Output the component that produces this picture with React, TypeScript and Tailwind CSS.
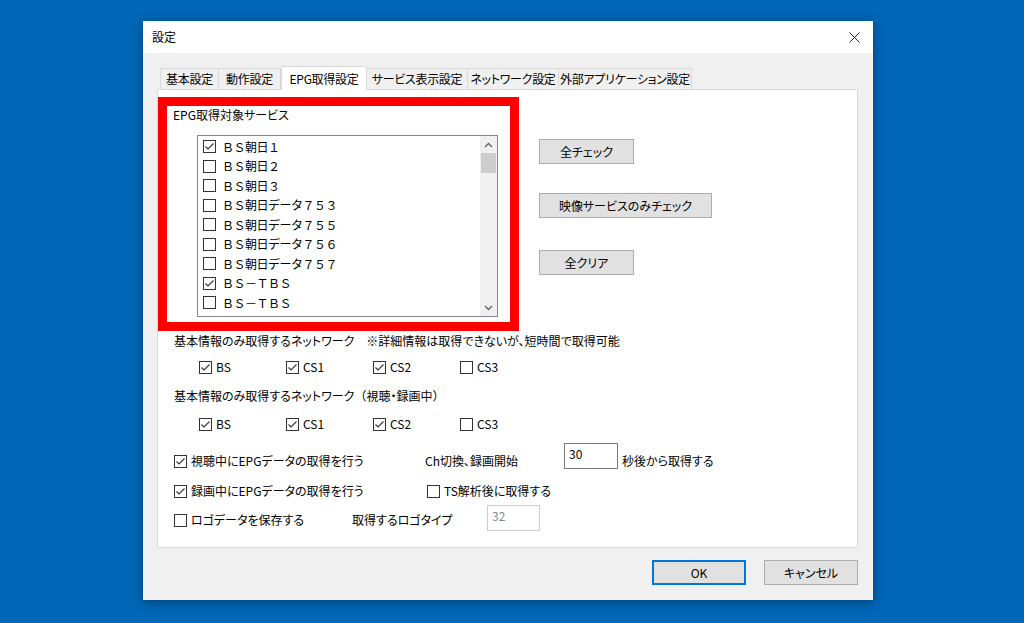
import React from "react";

const FONT = '"Noto Sans CJK JP", "Noto Sans", sans-serif';

const services: { name: string; checked: boolean }[] = [
  { name: "ＢＳ朝日１", checked: true },
  { name: "ＢＳ朝日２", checked: false },
  { name: "ＢＳ朝日３", checked: false },
  { name: "ＢＳ朝日データ７５３", checked: false },
  { name: "ＢＳ朝日データ７５５", checked: false },
  { name: "ＢＳ朝日データ７５６", checked: false },
  { name: "ＢＳ朝日データ７５７", checked: false },
  { name: "ＢＳ－ＴＢＳ", checked: true },
  { name: "ＢＳ－ＴＢＳ", checked: false },
];

const tabs = [
  { label: "基本設定", w: "w-[59px]" },
  { label: "動作設定", w: "w-[62px]" },
  { label: "EPG取得設定", w: "w-[86px]", active: true },
  { label: "サービス表示設定", w: "w-[101px]" },
  { label: "ネットワーク設定", w: "w-[91px]" },
  { label: "外部アプリケーション設定", w: "w-[133px]" },
];

function Box({ checked }: { checked: boolean }) {
  return (
    <span className="flex h-[13px] w-[13px] shrink-0 items-center justify-center border border-[#333333] bg-white">
      {checked && (
        <svg width="11" height="11" viewBox="0 0 11 11">
          <polyline points="1.5,5.5 4,8 9.5,2.5" fill="none" stroke="#333" strokeWidth="1.1" />
        </svg>
      )}
    </span>
  );
}

function Check({ checked, label, className = "" }: { checked: boolean; label: string; className?: string }) {
  return (
    <div className={`flex h-[20px] items-center gap-[4px] ${className}`}>
      <Box checked={checked} />
      <span className="whitespace-nowrap">{label}</span>
    </div>
  );
}

function Btn({ label, w, primary }: { label: string; w: string; primary?: boolean }) {
  return (
    <div
      className={`flex h-[25px] ${w} items-center justify-center border bg-[#e1e1e1] ${
        primary ? "border-[#0078d7] shadow-[inset_0_0_0_1px_#0078d7]" : "border-[#adadad]"
      }`}
    >
      {label}
    </div>
  );
}

function Chevron({ up }: { up?: boolean }) {
  return (
    <svg width="9" height="6" viewBox="0 0 9 6">
      <polyline
        points={up ? "1,5 4.5,1.5 8,5" : "1,1 4.5,4.5 8,1"}
        fill="none"
        stroke="#606060"
        strokeWidth="1.3"
      />
    </svg>
  );
}

function NetRow({ values }: { values: boolean[] }) {
  const names = ["BS", "CS1", "CS2", "CS3"];
  return (
    <div className="flex pl-[41px]">
      {names.map((n, i) => (
        <Check key={n} checked={values[i]} label={n} className="w-[87px]" />
      ))}
    </div>
  );
}

export default function App() {
  return (
    <div
      className="h-[623px] w-[1024px] overflow-hidden bg-[#0166b5] pl-[143px] pt-[21px] text-[12px] leading-[16px] text-black [font-feature-settings:'palt']"
      style={{ fontFamily: FONT }}
    >
      <div className="flex h-[579px] w-[730px] flex-col bg-[#f0f0f0] shadow-[0_2px_10px_rgba(0,0,0,0.35)]">
        {/* Title bar */}
        <div className="flex h-[32px] items-center justify-between bg-white pl-[9px] pr-[13px]">
          <span>設定</span>
          <svg width="11" height="11" viewBox="0 0 11 11">
            <path d="M0.5 0.5 L10.5 10.5 M10.5 0.5 L0.5 10.5" stroke="#222" strokeWidth="1" />
          </svg>
        </div>

        <div className="flex flex-1 flex-col pl-[14px] pr-[15px] pt-[13px]">
          {/* Tabs */}
          <div className="relative z-10 -mb-[1px] flex h-[24px] items-end pl-[3px] tracking-[-0.3px]">
            {tabs.map((t) =>
              t.active ? (
                <div
                  key={t.label}
                  className={`flex h-[24px] ${t.w} items-center justify-center whitespace-nowrap border border-b-0 border-[#d9d9d9] bg-white`}
                >
                  {t.label}
                </div>
              ) : (
                <div
                  key={t.label}
                  className={`mb-[1px] flex h-[21px] ${t.w} items-center justify-center whitespace-nowrap border border-b-0 border-l-0 border-[#d9d9d9] bg-[#f0f0f0] first:border-l`}
                >
                  {t.label}
                </div>
              )
            )}
          </div>

          {/* Panel */}
          <div className="flex h-[459px] flex-col border border-[#d9d9d9] bg-white pt-[7px]">
            <div className="flex">
              <div className="flex h-[234px] w-[361px] flex-col border-[9px] border-[#ff0000] pl-[6px] pt-[1px]">
                <div className="h-[16px]">EPG取得対象サービス</div>
                <div className="ml-[24px] mt-[12px] flex h-[182px] w-[301px] border border-[#828790] bg-white">
                  <div className="flex flex-1 flex-col pl-[5px] pt-[1px]">
                    {services.map((s, i) => (
                      <div key={i} className="flex h-[19.5px] items-center gap-[6px]">
                        <Box checked={s.checked} />
                        <span className="whitespace-nowrap tracking-[-0.5px] [font-feature-settings:normal]">
                          {s.name}
                        </span>
                      </div>
                    ))}
                  </div>
                  <div className="flex w-[17px] flex-col bg-[#f0f0f0]">
                    <div className="flex h-[17px] items-center justify-center">
                      <Chevron up />
                    </div>
                    <div className="mx-[1px] h-[20px] bg-[#cdcdcd]" />
                    <div className="flex-1" />
                    <div className="flex h-[17px] items-center justify-center">
                      <Chevron />
                    </div>
                  </div>
                </div>
              </div>

              <div className="ml-[20px] flex flex-col pt-[42px]">
                <Btn label="全チェック" w="w-[95px]" />
                <div className="mt-[29px]">
                  <Btn label="映像サービスのみチェック" w="w-[173px]" />
                </div>
                <div className="mt-[32px]">
                  <Btn label="全クリア" w="w-[95px]" />
                </div>
              </div>
            </div>

            <div className="flex h-[20px] items-center pl-[16px]">
              基本情報のみ取得するネットワーク　※詳細情報は取得できないが、短時間で取得可能
            </div>
            <div className="mt-[6px]">
              <NetRow values={[true, true, true, false]} />
            </div>
            <div className="mt-[9px] flex h-[20px] items-center pl-[16px]">
              基本情報のみ取得するネットワーク
              <span className="[font-feature-settings:normal]">（</span>視聴・録画中
              <span className="[font-feature-settings:normal]">）</span>
            </div>
            <div className="mt-[8px]">
              <NetRow values={[true, true, true, false]} />
            </div>

            <div className="mt-[9px] flex h-[28px] items-start pl-[16px]">
              <Check checked label="視聴中にEPGデータの取得を行う" className="mt-[8px] w-[251px]" />
              <div className="mt-[8px] flex h-[20px] w-[139px] items-center">Ch切換、録画開始</div>
              <div className="h-[26px] w-[54px] border border-[#7a7a7a] bg-white pl-[4px] pt-[2px]">30</div>
              <div className="ml-[4px] mt-[8px] flex h-[20px] items-center">秒後から取得する</div>
            </div>

            <div className="mt-[10px] flex pl-[16px]">
              <Check checked label="録画中にEPGデータの取得を行う" className="w-[253px]" />
              <Check checked={false} label="TS解析後に取得する" />
            </div>

            <div className="mt-[4px] flex h-[26px] items-start pl-[16px]">
              <Check checked={false} label="ロゴデータを保存する" className="mt-[5px] w-[178px]" />
              <div className="mt-[5px] flex h-[20px] w-[135px] items-center">取得するロゴタイプ</div>
              <div className="h-[26px] w-[53px] border border-[#cccccc] bg-white pl-[4px] pt-[2px] text-[#8a8a8a]">32</div>
            </div>
          </div>

          {/* Bottom buttons */}
          <div className="mt-[12px] flex justify-end gap-[18px]">
            <Btn label="OK" w="w-[94px]" primary />
            <Btn label="キャンセル" w="w-[94px]" />
          </div>
        </div>
      </div>
    </div>
  );
}
